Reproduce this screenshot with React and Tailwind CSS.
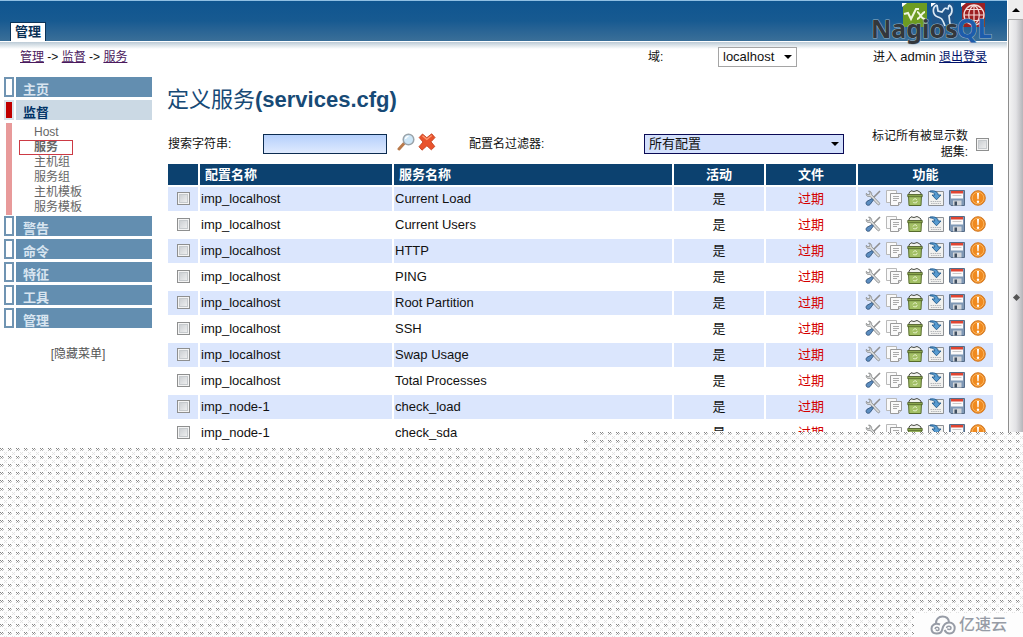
import { useState } from 'react';

const services = [
  { id: 1, config: 'imp_localhost', name: 'Current Load' },
  { id: 2, config: 'imp_localhost', name: 'Current Users' },
  { id: 3, config: 'imp_localhost', name: 'HTTP' },
  { id: 4, config: 'imp_localhost', name: 'PING' },
  { id: 5, config: 'imp_localhost', name: 'Root Partition' },
  { id: 6, config: 'imp_localhost', name: 'SSH' },
  { id: 7, config: 'imp_localhost', name: 'Swap Usage' },
  { id: 8, config: 'imp_localhost', name: 'Total Processes' },
  { id: 9, config: 'imp_node-1', name: 'check_load' },
  { id: 10, config: 'imp_node-1', name: 'check_sda' },
];

const menu = [
  { label: '主页' },
  { label: '监督', items: ['Host', '服务', '主机组', '服务组', '主机模板', '服务模板'] },
  { label: '警告' },
  { label: '命令' },
  { label: '特征' },
  { label: '工具' },
  { label: '管理' },
];

const checkboxClass =
  'block h-[13px] w-[13px] appearance-none border border-[#8e8f8f] bg-linear-to-br from-[#c4c8cc] to-[#f6f6f6] shadow-[inset_0_0_0_1px_#f4f4f4,inset_0_0_0_2px_#c6cacd] checked:from-[#0c416f]';

function ModifyIcon() {
  return (
    <svg viewBox="0 0 16 16" className="h-4 w-4" fill="none">
      <path d="M15 1 8 8" stroke="#8f8f8f" strokeWidth="1.6" />
      <path d="M3.6 1 5 2.7 4.6 4.4 3 4.8 1.3 3.4c-.3 2 .7 3 2.3 3.1.6 0 1-.1 1.4-.3l7.6 8.2c.5.5 1.2.6 1.7.1.5-.5.5-1.2 0-1.7L6.7 4.8C7 2.8 5.6 1 3.6 1Z" fill="#dcdddd" stroke="#7d8080" strokeWidth=".8" />
      <path d="m7 8.6 1.4 1.4-3.2 4.4c-1 1.1-2.7 1.2-3.6.3-.9-.9-.7-2.5.4-3.4Z" fill="#5c8dc0" stroke="#2b4d74" strokeWidth=".8" />
    </svg>
  );
}

function CopyIcon() {
  return (
    <svg viewBox="0 0 16 16" className="h-4 w-4" fill="#fafafa" stroke="#9a9a9a">
      <path d="M.5.5h10v12H.5Z" stroke="#b9b9b9" />
      <path d="M4.5 3.5h11v9l-3 3h-8Z" />
      <path d="M15.5 12.5h-3v3" fill="#ddd" />
      <path d="M7 6.5h6M7 8.5h6M7 10.5h4" stroke="#aaa" />
    </svg>
  );
}

function DeleteIcon() {
  return (
    <svg viewBox="0 0 16 16" className="h-4 w-4">
      <path d="M1.5 5h13l-.5 10.5H2Z" fill="#a3c065" stroke="#566b2c" />
      <path d="M2 3 4 .8l3 .7 3-1 2 1 2 1.5v2H2Z" fill="#f2f2ee" stroke="#33372c" strokeWidth=".9" />
      <path d="M.7 4.5h14.6v2.2H.7Z" fill="#8ba64e" stroke="#435420" strokeWidth=".7" />
      <path d="m6 10.5 1.4-1.7h1.5l1 1.4M10.3 11l-1 1.8H6.8L5.9 12" fill="none" stroke="#e2edc4" />
    </svg>
  );
}

function DownloadIcon() {
  return (
    <svg viewBox="0 0 16 16" className="h-4 w-4">
      <path d="M.5 1.5h15v14H.5Z" fill="#f1f1ef" stroke="#8d9094" />
      <path d="M2 1c5-.7 8 1 8.2 4H13L8.5 9.8 4 5h2.8C6.7 3.2 5.2 2 2 1.8Z" fill="#579bd0" stroke="#245b8d" strokeWidth=".9" />
      <path d="M2.5 11.5h11M3 13.5h10" stroke="#b5b7ba" strokeDasharray="1.5 .7" />
    </svg>
  );
}

function SaveIcon() {
  return (
    <svg viewBox="0 0 16 16" className="h-4 w-4">
      <path d="M.5.5h15v15H2L.5 14Z" fill="#7f98b5" stroke="#566c87" />
      <path d="M2 1h12v7.5H2Z" fill="#fbfbfb" />
      <path d="M2 1h12v2.5H2Z" fill="#e04532" />
      <path d="M3.5 5.5h9" stroke="#c9c9c9" />
      <path d="M4 10.5h8.5v5H4Z" fill="#d3d6da" />
      <path d="M5.5 11.5H8v4H5.5Z" fill="#3e4e61" />
    </svg>
  );
}

function WarningIcon() {
  return (
    <svg viewBox="0 0 16 16" className="h-4 w-4">
      <circle cx="8" cy="8" r="7.3" fill="#f08a1f" stroke="#d07a28" />
      <circle cx="8" cy="8" r="5.8" fill="none" stroke="#fab35c" />
      <path d="M7 3h2l-.4 6.2H7.4Z" fill="#fff" />
      <circle cx="8" cy="11.7" r="1.2" fill="#fff" />
    </svg>
  );
}

const actions = [
  { label: '修改', Icon: ModifyIcon },
  { label: '复制', Icon: CopyIcon },
  { label: '删除', Icon: DeleteIcon },
  { label: '下载', Icon: DownloadIcon },
  { label: '写入', Icon: SaveIcon },
  { label: '信息', Icon: WarningIcon },
];

function Logo() {
  return (
    <svg viewBox="0 0 124 48" className="h-12 w-[124px] overflow-visible" role="img" aria-label="NagiosQL">
      <path d="M32 3h24v24H32Z" fill="#6d9c22" />
      <path d="M61 3h22v22H61Z" fill="#205589" />
      <path d="M91 3h23v24H91Z" fill="#9c2022" />
      <path d="M31 7V3h5ZM60 7V3h5ZM90 7V3h5Z" fill="#fff" />
      <path d="m33 14 4-1 3 6 5-10h3M46 12c3 0 3 7 8 7M54 12c-3 0-5 7-8 7" fill="none" stroke="#f0f6df" strokeWidth="2" />
      <path d="M66 5c-5 2-5 10 1 12 3 1 4 1 5 4l2 5M66 5l1 6 4 1 3-4M78 5c4 2 4 8 0 11l1 8M78 5l-1 4-3-1" fill="none" stroke="#dceaf5" strokeWidth="1.7" />
      <circle cx="103" cy="15" r="10" fill="none" stroke="#f4d9d6" strokeWidth="1.4" />
      <path d="M93 15h20M95 9.5h16M95 20.5h16M103 5v20M103 5c-7 5-7 15 0 20M103 5c7 5 7 15 0 20" fill="none" stroke="#f4d9d6" strokeWidth="1.2" />
      <g className="font-['Noto_Sans'] font-bold" stroke="#9db4c6" strokeWidth="1" paintOrder="stroke" strokeLinejoin="round">
        <text x="0" y="38" fill="#33373b" className="text-[25px]">Nagios</text>
        <text x="86" y="38" fill="#1d5cab" className="text-[26px]">QL</text>
      </g>
    </svg>
  );
}

function Header() {
  return (
    <header className="flex h-[42px] items-end justify-between border-t border-b border-t-[#8fbfe3] border-b-white bg-linear-to-b from-[#0f5590] via-[#175a91] to-[#3a6f98] pr-3 pl-[10px]">
      <a href="#admin" className="border border-b-0 border-[#0b3358] bg-white px-1 text-[13px] leading-[18px] font-bold text-[#0a3055]">
        管理
      </a>
      <div className="-mb-[7px]">
        <Logo />
      </div>
    </header>
  );
}

function TopBar() {
  return (
    <div className="flex h-[35px] items-start bg-linear-to-b from-[#bccbd6] to-white to-[7px] pt-[5px] pr-5 pl-5 text-[12px] leading-5">
      <nav className="flex-1">
        <a href="#admin" className="text-[#4b1a5e] underline">管理</a>
        {' -> '}
        <a href="#monitoring" className="text-[#4b1a5e] underline">监督</a>
        {' -> '}
        <a href="#services" className="text-[#4b1a5e] underline">服务</a>
      </nav>
      <label htmlFor="domain" className="w-[70px]">域:</label>
      <div className="relative">
        <select id="domain" className="block h-5 w-[79px] appearance-none border border-[#a5a5a5] bg-white pl-1 text-[13px] leading-[18px]">
          <option>localhost</option>
        </select>
        <span className="pointer-events-none absolute top-2 right-[5px] border-x-4 border-t-4 border-x-transparent border-t-black" />
      </div>
      <div className="w-[190px] text-right">
        进入 <span className="text-[13px]">admin</span>{' '}
        <a href="#logout" className="text-[#00126b] underline">退出登录</a>
      </div>
    </div>
  );
}

function Sidebar() {
  return (
    <aside className="w-[152px] shrink-0 pl-1">
      <ul className="flex flex-col gap-[3px]">
        {menu.map((entry) => (
          <li key={entry.label}>
            <a href="#menu" className="flex h-5 gap-[2px]">
              {entry.items ? (
                <span className="w-[10px] border-2 border-[#dbe4ec] bg-[#c00000]" />
              ) : (
                <span className="w-[10px] border-2 border-[#7094b2] bg-white" />
              )}
              <span
                className={`flex-1 overflow-hidden pt-[3px] pl-[7px] text-[13px] leading-5 font-bold ${
                  entry.items ? 'bg-[#cbd9e4] text-[#003366]' : 'bg-[#638eb0] text-[#d8e5f0]'
                }`}
              >
                {entry.label}
              </span>
            </a>
            {entry.items && (
              <ul className="mt-[3px] -mb-[2px] ml-[2px] border-l-6 border-[#e89a9a] pt-[2px] pl-[7px] text-[12px] leading-[15px] text-[#666]">
                {entry.items.map((item) => (
                  <li key={item}>
                    {item === '服务' ? (
                      <a href="#services" className="block w-[54px] pl-[15px] font-bold outline -outline-offset-1 outline-[#cc3a44]">{item}</a>
                    ) : (
                      <a href="#item" className="block pl-[15px]">
                        {item}
                      </a>
                    )}
                  </li>
                ))}
              </ul>
            )}
          </li>
        ))}
      </ul>
      <button type="button" className="mt-4 block w-full text-center text-[12px] leading-5 text-[#555]">
        [隐藏菜单]
      </button>
    </aside>
  );
}

function SearchBar() {
  const [search, setSearch] = useState('');

  return (
    <div className="flex h-10 items-center pt-1 pr-[6px] pl-[2px] text-[12px] leading-4">
      <label htmlFor="search" className="w-[95px]">搜索字符串:</label>
      <input
        id="search"
        type="text"
        value={search}
        onChange={(e) => setSearch(e.target.value)}
        className="h-5 w-[124px] border border-[#0c2c50] bg-linear-to-b from-[#b5cffb] to-[#dfeafe] px-1 text-[13px]"
      />
      <button type="button" aria-label="搜索" className="ml-[10px] pb-1">
        <svg viewBox="0 0 18 18" className="h-[18px] w-[18px]">
          <path d="m2 16 5-5.5" stroke="#b97a4b" strokeWidth="3" strokeLinecap="round" />
          <circle cx="11.5" cy="6.5" r="5.3" fill="#cde6f7" stroke="#9ba4aa" strokeWidth="1.5" />
          <path d="M8.5 6c.3-1.7 1.5-2.5 3-2.6" stroke="#fff" fill="none" strokeWidth="1.4" />
        </svg>
      </button>
      <button type="button" aria-label="清除" onClick={() => setSearch('')} className="ml-[3px] pb-1">
        <svg viewBox="0 0 18 18" className="h-[18px] w-[18px]">
          <path d="m4.5 1 4.3 3.7L13.7.8l3.3 3.7-4 4.3 3.8 4.7-3.5 3.3-4.4-4-4.9 4.4L1 13.7 5 9 1.2 4.5Z" fill="#e9532c" stroke="#c3411f" strokeWidth=".9" />
          <path d="m4.5 2.7 4.3 3.8 4.9-4" fill="none" stroke="#ff9a73" strokeWidth="1.3" />
        </svg>
      </button>
      <label htmlFor="filter" className="ml-[33px] flex-1">配置名过滤器:</label>
      <div className="relative">
        <select id="filter" className="block h-5 w-[200px] appearance-none border border-[#0a0a55] bg-[#d3e0fc] pl-1 text-[13px] leading-[18px]">
          <option>所有配置</option>
        </select>
        <span className="pointer-events-none absolute top-2 right-[5px] border-x-4 border-t-4 border-x-transparent border-t-black" />
      </div>
      <label htmlFor="mark-all" className="ml-6 w-[100px] text-right">标记所有被显示数据集:</label>
      <input id="mark-all" type="checkbox" className={`ml-2 ${checkboxClass}`} />
    </div>
  );
}

function ServiceTable() {
  return (
    <table className="w-full table-fixed border-separate border-spacing-[2px] text-[13px] leading-5">
      <thead>
        <tr className="h-[21px] text-white [&>th]:bg-[#0c416f] [&>th]:p-0">
          <th className="w-[30px]" aria-label="选择" />
          <th className="w-[192px] text-left"><span className="pl-[5px]">配置名称</span></th>
          <th className="text-left"><span className="pl-[5px]">服务名称</span></th>
          <th className="w-[90px]">活动</th>
          <th className="w-[90px]">文件</th>
          <th className="w-[135px]">功能</th>
        </tr>
      </thead>
      <tbody>
        {services.map((service) => (
          <tr key={service.id} className="h-6 odd:[&>td]:bg-[#dbe6fd] [&>td]:px-px [&>td]:py-0">
            <td>
              <input type="checkbox" aria-label={service.name} className={`mx-auto mb-px ${checkboxClass}`} />
            </td>
            <td>{service.config}</td>
            <td>{service.name}</td>
            <td className="text-center">是</td>
            <td className="text-center text-[#d40000]">过期</td>
            <td>
              <div className="flex justify-center gap-[5px] pb-[2px]">
                {actions.map(({ label, Icon }) => (
                  <button key={label} type="button" aria-label={label}>
                    <Icon />
                  </button>
                ))}
              </div>
            </td>
          </tr>
        ))}
      </tbody>
    </table>
  );
}

function Scrollbar() {
  return (
    <div className="flex w-4 shrink-0 flex-col pl-px" aria-hidden="true">
      <div className="flex h-5 items-center justify-center border-b border-[#aaa] bg-[#eee]">
        <span className="border-x-4 border-b-4 border-x-transparent border-b-black" />
      </div>
      <div className="flex-1 border-l border-[#8d8d8d] bg-linear-to-r from-[#f4f4f4] via-[#e2e2e5] to-[#b5b5b9] pt-[275px]">
        <span className="mx-auto block h-[5px] w-[5px] rotate-45 bg-[#555]" />
      </div>
    </div>
  );
}

function Dots({ id, className }) {
  return (
    <svg className={className} aria-hidden="true">
      <defs>
        <pattern id={id} width="8" height="8" patternUnits="userSpaceOnUse">
          <path d="M0 0h8v8H0Z" fill="#fdfdfd" />
          <path d="M0 0h1v1H0ZM2 0h1v1H2ZM1 1h1v1H1Z" fill="#858585" />
          <path d="M0 2h1v1H0ZM2 2h1v1H2ZM3 1h1v1H3Z" fill="#bdbdbd" />
          <path d="M4 4h1v1H4ZM6 4h1v1H6ZM5 5h1v1H5ZM4 6h1v1H4ZM6 6h1v1H6Z" fill="#e2e2e2" />
        </pattern>
      </defs>
      <rect width="100%" height="100%" fill={`url(#${id})`} />
    </svg>
  );
}

function Watermark() {
  return (
    <div className="absolute right-0 bottom-0 flex items-center gap-[3px] bg-[#fdfdfd] pr-4 pl-4 text-[16px] leading-6 font-medium text-[#979ca6]">
      <svg viewBox="0 0 26 20" className="h-5 w-[26px]" fill="none" stroke="currentColor" strokeWidth="2">
        <path d="M6 9C5.5 4.5 8.5 1.5 12.5 1.5c3.5 0 6 2 6.5 5.5" />
        <path d="M10 9.5C4.5 7.5 1.5 10.5 1.5 13.8c0 6 9.5 6.4 10.7.7C13.5 9 15.5 7.5 19 7.5c7.5 0 7.5 11 .5 11-2.5 0-4-1.5-5-3.5" />
        <path d="M5 14c.5-2.5 4-2 4 0s-2.5 2-3 .5M16.5 13c.5-2.5 4.5-2 4.5 0s-3 2-3.5.5" strokeWidth="1.5" />
      </svg>
      亿速云
    </div>
  );
}

function App() {
  return (
    <div className="relative flex min-h-screen overflow-hidden bg-white font-['Liberation_Sans','Noto_Sans_CJK_SC',sans-serif] text-[#111]">
      <div className="min-w-0 flex-1">
        <Header />
        <TopBar />
        <div className="flex">
          <Sidebar />
          <main className="min-w-0 flex-1 pr-3 pl-[14px]">
            <h1 className="flex h-[45px] items-center pl-px text-[22px] leading-7 text-[#174a76]">
              定义服务<b>(services.cfg)</b>
            </h1>
            <SearchBar />
            <ServiceTable />
          </main>
        </div>
      </div>
      <Scrollbar />
      {/* the dotted area covers the lower part of the window, in steps */}
      <Dots id="dots-right" className="absolute top-[432px] left-[592px] h-full w-full" />
      <Dots id="dots-step" className="absolute top-[440px] left-[584px] h-full w-2" />
      <Dots id="dots-left" className="absolute top-[448px] left-0 h-full w-[584px]" />
      <Watermark />
    </div>
  );
}

export default App;
